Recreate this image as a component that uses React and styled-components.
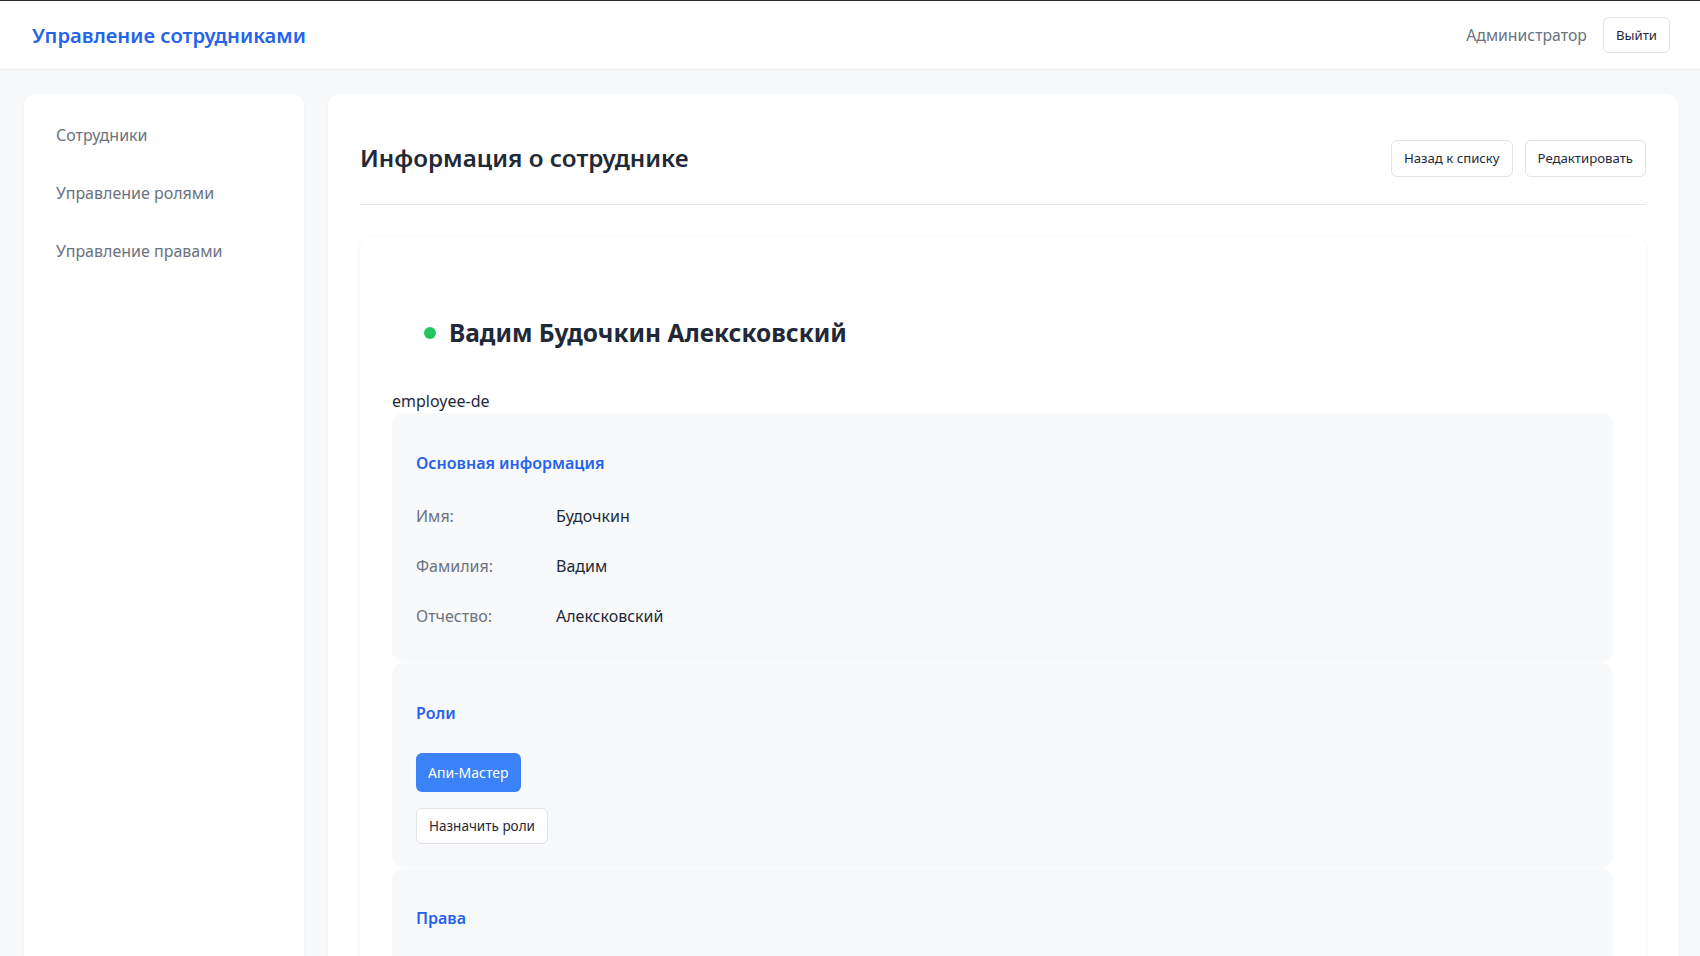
import React from "react";
import styled, { createGlobalStyle } from "styled-components";

const GlobalStyle = createGlobalStyle`
  * { box-sizing: border-box; }
  html, body { margin: 0; padding: 0; }
  body {
    background: #f7f8fa;
    font-family: "Noto Sans", "Open Sans", sans-serif;
    color: #1f2937;
  }
`;

const Page = styled.div`
  min-height: 100vh;
  display: flex;
  flex-direction: column;
`;

const Header = styled.header`
  height: 70px;
  background: #ffffff;
  border-top: 1px solid #2e2822;
  border-bottom: 1px solid #eceef1;
  display: flex;
  align-items: center;
  justify-content: space-between;
  padding: 0 30px 0 32px;
`;

const Brand = styled.h1`
  margin: 0;
  font-size: 20.2px;
  font-weight: 600;
  color: #2563eb;
`;

const UserBox = styled.div`
  display: flex;
  align-items: center;
  gap: 16px;
`;

const UserName = styled.span`
  font-size: 15.8px;
  color: #6b7280;
`;

const Button = styled.button`
  font-family: inherit;
  font-size: ${(p) => p.$fs || 13.2}px;
  color: #1f2937;
  background: #ffffff;
  border: 1px solid #e0e2e6;
  border-radius: 6px;
  height: ${(p) => p.$h || 36}px;
  padding: 0 12px;
  cursor: pointer;
`;

const Layout = styled.div`
  flex: 1;
  display: flex;
  align-items: stretch;
  gap: 24px;
  padding: 24px 22px 24px 24px;
`;

const Sidebar = styled.nav`
  width: 280px;
  flex-shrink: 0;
  background: #ffffff;
  border-radius: 12px;
  box-shadow: 0 1px 3px rgba(0, 0, 0, 0.04);
  padding: 12px 0;
`;

const NavItem = styled.div`
  padding: 17px 32px;
  font-size: 16px;
  line-height: 24px;
  color: #6b7280;
`;

const Main = styled.main`
  flex: 1;
  background: #ffffff;
  border-radius: 12px;
  box-shadow: 0 1px 3px rgba(0, 0, 0, 0.04);
  padding: 32px;
`;

const MainHeader = styled.div`
  display: flex;
  align-items: center;
  justify-content: space-between;
  padding: 12px 0 26px;
  border-bottom: 1px solid #e5e7eb;
`;

const PageTitle = styled.h2`
  margin: 0;
  font-size: 24.2px;
  line-height: 40px;
  font-weight: 600;
  color: #1f2937;
`;

const Actions = styled.div`
  display: flex;
  gap: 12px;
`;

const Card = styled.div`
  margin-top: 32px;
  background: #ffffff;
  border-radius: 12px;
  box-shadow: 0 1px 4px rgba(0, 0, 0, 0.06);
  padding: 32px 33px 32px 32px;
`;

const NameRow = styled.div`
  display: flex;
  align-items: center;
  gap: 13px;
  padding: 46px 32px 0;
  margin-bottom: 39px;
`;

const StatusDot = styled.span`
  width: 12px;
  height: 12px;
  border-radius: 50%;
  background: ${(p) => (p.$active ? "#22c55e" : "#9ca3af")};
`;

const FullName = styled.h3`
  margin: 0;
  font-size: 24.5px;
  line-height: 36px;
  font-weight: 700;
  color: #1f2937;
`;

const Login = styled.div`
  font-size: 16px;
  line-height: 23px;
  color: #1f2937;
`;

const Section = styled.section`
  background: #f8f9fb;
  border-radius: 12px;
  padding: 38px 24px ${(p) => p.$pb || 21}px;
  margin-bottom: 1px;
`;

const SectionTitle = styled.h4`
  margin: 0 0 16px;
  font-size: 16px;
  line-height: 24px;
  font-weight: 600;
  color: #2563eb;
`;

const InfoRow = styled.div`
  display: flex;
  padding: 13px 0;
  font-size: 16px;
  line-height: 24px;
`;

const InfoLabel = styled.span`
  width: 140px;
  color: #6b7280;
`;

const InfoValue = styled.span`
  color: #1f2937;
`;

const RoleList = styled.div`
  display: flex;
  flex-wrap: wrap;
  gap: 8px;
  margin-top: 28px;
`;

const RoleChip = styled.span`
  display: inline-flex;
  align-items: center;
  height: 39px;
  padding: 0 12px;
  border-radius: 6px;
  background: #3b82f6;
  color: #ffffff;
  font-size: 14px;
`;

const AssignWrap = styled.div`
  margin-top: 16px;
`;

export default function App() {
  const info = [
    ["Имя:", "Будочкин"],
    ["Фамилия:", "Вадим"],
    ["Отчество:", "Алексковский"],
  ];
  return (
    <Page>
      <GlobalStyle />
      <Header>
        <Brand>Управление сотрудниками</Brand>
        <UserBox>
          <UserName>Администратор</UserName>
          <Button>Выйти</Button>
        </UserBox>
      </Header>
      <Layout>
        <Sidebar>
          <NavItem>Сотрудники</NavItem>
          <NavItem>Управление ролями</NavItem>
          <NavItem>Управление правами</NavItem>
        </Sidebar>
        <Main>
          <MainHeader>
            <PageTitle>Информация о сотруднике</PageTitle>
            <Actions>
              <Button $h={37}>Назад к списку</Button>
              <Button $h={37}>Редактировать</Button>
            </Actions>
          </MainHeader>
          <Card>
            <NameRow>
              <StatusDot $active />
              <FullName>Вадим Будочкин Алексковский</FullName>
            </NameRow>
            <Login>employee-de</Login>
            <Section>
              <SectionTitle>Основная информация</SectionTitle>
              {info.map(([l, v]) => (
                <InfoRow key={l}>
                  <InfoLabel>{l}</InfoLabel>
                  <InfoValue>{v}</InfoValue>
                </InfoRow>
              ))}
            </Section>
            <Section $pb={23}>
              <SectionTitle>Роли</SectionTitle>
              <RoleList>
                <RoleChip>Апи-Мастер</RoleChip>
              </RoleList>
              <AssignWrap>
                <Button $fs={13.5}>Назначить роли</Button>
              </AssignWrap>
            </Section>
            <Section>
              <SectionTitle>Права</SectionTitle>
              <RoleList>
                <RoleChip>Чтение</RoleChip>
              </RoleList>
            </Section>
          </Card>
        </Main>
      </Layout>
    </Page>
  );
}
